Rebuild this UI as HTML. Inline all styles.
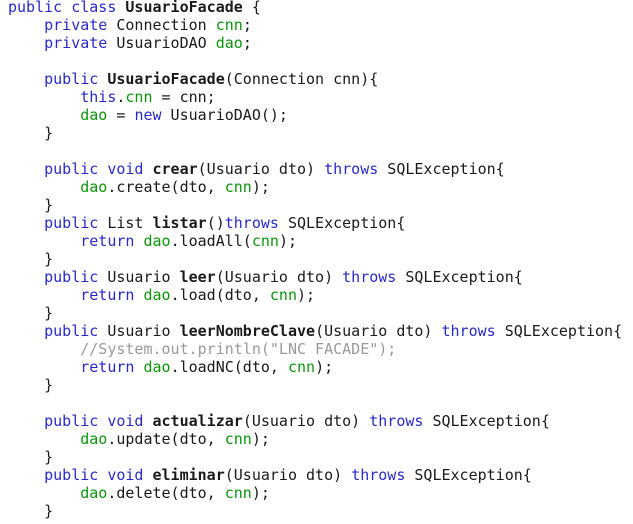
<!DOCTYPE html>
<html><head><style>
html,body{margin:0;padding:0;background:#fff;width:633px;height:524px;overflow:hidden}
pre{margin:-2px 0 0 8px;font-family:"DejaVu Sans Mono","Liberation Mono",monospace;font-size:15px;line-height:18px;color:#1a1a1a}
.k{color:#2a2ac8}.f{color:#0a960a}.c{color:#9a9a9a}b{font-weight:bold}
</style></head><body><pre><span class="k">public class</span> <b>UsuarioFacade</b> {
    <span class="k">private</span> Connection <span class="f">cnn</span>;
    <span class="k">private</span> UsuarioDAO <span class="f">dao</span>;

    <span class="k">public</span> <b>UsuarioFacade</b>(Connection cnn){
        <span class="k">this</span>.<span class="f">cnn</span> = cnn;
        <span class="f">dao</span> = <span class="k">new</span> UsuarioDAO();
    }

    <span class="k">public void</span> <b>crear</b>(Usuario dto) <span class="k">throws</span> SQLException{
        <span class="f">dao</span>.create(dto, <span class="f">cnn</span>);
    }
    <span class="k">public</span> List <b>listar</b>()<span class="k">throws</span> SQLException{
        <span class="k">return</span> <span class="f">dao</span>.loadAll(<span class="f">cnn</span>);
    }
    <span class="k">public</span> Usuario <b>leer</b>(Usuario dto) <span class="k">throws</span> SQLException{
        <span class="k">return</span> <span class="f">dao</span>.load(dto, <span class="f">cnn</span>);
    }
    <span class="k">public</span> Usuario <b>leerNombreClave</b>(Usuario dto) <span class="k">throws</span> SQLException{
        <span class="c">//System.out.println("LNC FACADE");</span>
        <span class="k">return</span> <span class="f">dao</span>.loadNC(dto, <span class="f">cnn</span>);
    }

    <span class="k">public void</span> <b>actualizar</b>(Usuario dto) <span class="k">throws</span> SQLException{
        <span class="f">dao</span>.update(dto, <span class="f">cnn</span>);
    }
    <span class="k">public void</span> <b>eliminar</b>(Usuario dto) <span class="k">throws</span> SQLException{
        <span class="f">dao</span>.delete(dto, <span class="f">cnn</span>);
    }
</pre></body></html>
